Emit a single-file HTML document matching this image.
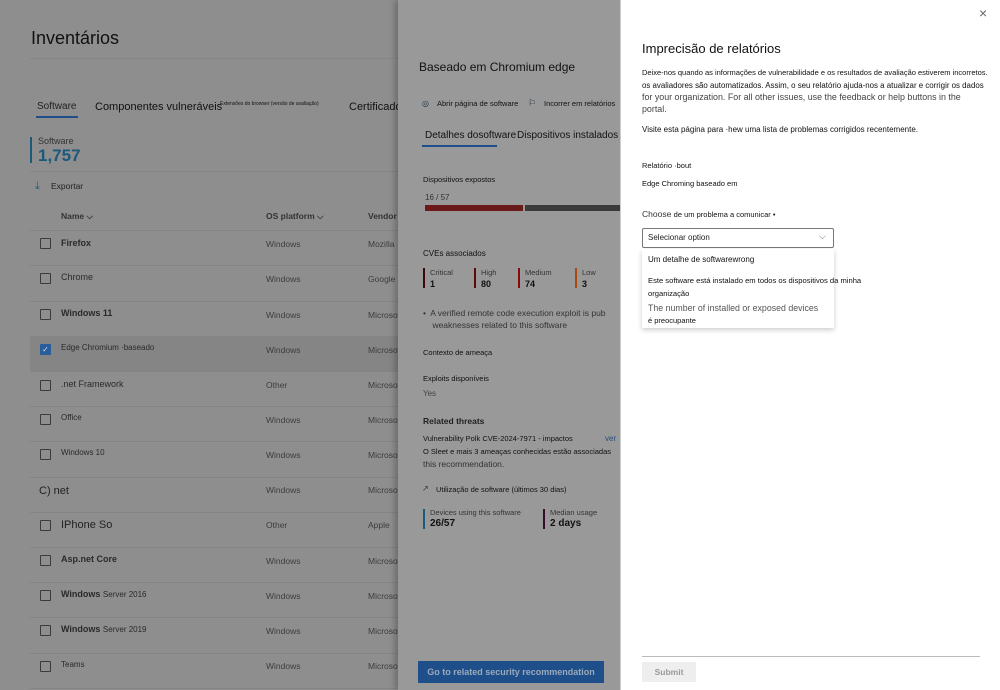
<!DOCTYPE html>
<html><head><meta charset="utf-8"><style>
*{margin:0;padding:0;box-sizing:border-box}
body{width:1000px;height:690px;overflow:hidden;position:relative;font-family:"Liberation Sans",sans-serif;background:#8e8e8e;color:#111}
.a{position:absolute;white-space:nowrap}
.l{position:absolute;height:1px;background:#848484}
.cb{position:absolute;left:40px;width:11px;height:11px;border:1px solid #3a3a3a;border-radius:1px}
.t{font-size:9px;color:#2a2a2a}
.g{color:#3c3c3c;font-size:8.5px}
#mid{position:absolute;left:398px;top:0;width:222px;height:690px;background:#999;box-shadow:-3px 0 6px rgba(0,0,0,.25)}
#rp{position:absolute;left:620px;top:0;width:380px;height:690px;background:#fff;border-left:1px solid #ccc}
</style></head><body>
<div class="a" style="left:31px;top:28px;font-size:18px;color:#111">Inventários</div>
<div class="l" style="left:30px;top:58px;width:370px;background:#858585"></div>
<div class="a" style="left:37px;top:101px;font-size:10px;color:#222">Software</div>
<div class="a" style="left:36px;top:116px;width:42px;height:2px;background:#1f4f8a"></div>
<div class="a" style="left:95px;top:101px;font-size:11px;color:#111">Componentes vulneráveis</div>
<div class="a" style="left:220px;top:101px;font-size:5px;color:#111">Extensões do browser (versão de avaliação)</div>
<div class="a" style="left:349px;top:101px;font-size:11px;color:#111">Certificado</div>
<div class="a" style="left:30px;top:137px;width:2px;height:26px;background:#1d5a7a"></div>
<div class="a" style="left:38px;top:136px;font-size:9px;color:#333">Software</div>
<div class="a" style="left:38px;top:146px;font-size:17px;font-weight:bold;color:#1d5a7a">1,757</div>
<div class="l" style="left:30px;top:171px;width:370px"></div>
<div class="a" style="left:35px;top:180px;font-size:11px;color:#1d5a7a">⤓</div>
<div class="a" style="left:51px;top:181px;font-size:8.5px;color:#222">Exportar</div>
<div class="a" style="left:61px;top:211px;font-size:8.5px;font-weight:bold;color:#333">Name ⌵</div>
<div class="a" style="left:266px;top:211px;font-size:8.5px;font-weight:bold;color:#333">OS platform ⌵</div>
<div class="a" style="left:368px;top:211px;font-size:8.5px;font-weight:bold;color:#333">Vendor</div>
<div class="l" style="left:30px;top:230px;width:370px"></div>
<div class="a" style="left:30px;top:336px;width:370px;height:35px;background:#858585"></div>

<div class="cb" style="top:238px"></div><div class="a t" style="left:61px;top:238px;font-weight:bold">Firefox</div><div class="a g" style="left:266px;top:239px">Windows</div><div class="a g" style="left:368px;top:239px">Mozilla</div><div class="l" style="left:30px;top:265px;width:370px"></div>
<div class="cb" style="top:273px"></div><div class="a t" style="left:61px;top:272px">Chrome</div><div class="a g" style="left:266px;top:274px">Windows</div><div class="a g" style="left:368px;top:274px">Google</div><div class="l" style="left:30px;top:301px;width:370px"></div>
<div class="cb" style="top:309px"></div><div class="a t" style="left:61px;top:308px;font-weight:bold">Windows 11</div><div class="a g" style="left:266px;top:310px">Windows</div><div class="a g" style="left:368px;top:310px">Microsof</div>
<div class="cb" style="top:344px;background:#2a5d9c;border-color:#2a5d9c;color:#ddd;font-size:8px;line-height:9px;text-align:center">✓</div><div class="a t" style="left:61px;top:343px;font-size:8px">Edge Chromium ·baseado</div><div class="a g" style="left:266px;top:345px">Windows</div><div class="a g" style="left:368px;top:345px">Microsof</div><div class="l" style="left:30px;top:371px;width:370px"></div>
<div class="cb" style="top:380px"></div><div class="a t" style="left:61px;top:379px">.net Framework</div><div class="a g" style="left:266px;top:380px">Other</div><div class="a g" style="left:368px;top:380px">Microsof</div><div class="l" style="left:30px;top:406px;width:370px"></div>
<div class="cb" style="top:414px"></div><div class="a t" style="left:61px;top:413px;font-size:8px">Office</div><div class="a g" style="left:266px;top:415px">Windows</div><div class="a g" style="left:368px;top:415px">Microsof</div><div class="l" style="left:30px;top:441px;width:370px"></div>
<div class="cb" style="top:449px"></div><div class="a t" style="left:61px;top:448px;font-size:8px">Windows 10</div><div class="a g" style="left:266px;top:450px">Windows</div><div class="a g" style="left:368px;top:450px">Microsof</div><div class="l" style="left:30px;top:477px;width:370px"></div>
<div class="a" style="left:39px;top:485px;font-size:11px;color:#222">C) net</div><div class="a g" style="left:266px;top:485px">Windows</div><div class="a g" style="left:368px;top:485px">Microsof</div><div class="l" style="left:30px;top:512px;width:370px"></div>
<div class="cb" style="top:520px"></div><div class="a" style="left:61px;top:519px;font-size:11px;color:#222">IPhone So</div><div class="a g" style="left:266px;top:520px">Other</div><div class="a g" style="left:368px;top:520px">Apple</div><div class="l" style="left:30px;top:547px;width:370px"></div>
<div class="cb" style="top:555px"></div><div class="a t" style="left:61px;top:554px;font-weight:bold">Asp.net Core</div><div class="a g" style="left:266px;top:556px">Windows</div><div class="a g" style="left:368px;top:556px">Microsof</div><div class="l" style="left:30px;top:582px;width:370px"></div>
<div class="cb" style="top:590px"></div><div class="a t" style="left:61px;top:589px;font-weight:bold">Windows <span style="font-weight:normal;font-size:8px">Server 2016</span></div><div class="a g" style="left:266px;top:591px">Windows</div><div class="a g" style="left:368px;top:591px">Microsof</div><div class="l" style="left:30px;top:617px;width:370px"></div>
<div class="cb" style="top:625px"></div><div class="a t" style="left:61px;top:624px;font-weight:bold">Windows <span style="font-weight:normal;font-size:8px">Server 2019</span></div><div class="a g" style="left:266px;top:626px">Windows</div><div class="a g" style="left:368px;top:626px">Microsof</div><div class="l" style="left:30px;top:653px;width:370px"></div>
<div class="cb" style="top:661px"></div><div class="a t" style="left:61px;top:660px;font-size:8px">Teams</div><div class="a g" style="left:266px;top:661px">Windows</div><div class="a g" style="left:368px;top:661px">Microsof</div><div class="l" style="left:30px;top:688px;width:370px"></div>

<div id="mid">
<div class="a" style="left:21px;top:60px;font-size:12px;color:#111">Baseado em Chromium edge</div>
<div class="a" style="left:24px;top:99px;font-size:8px;color:#234">◎</div>
<div class="a" style="left:39px;top:99px;font-size:7.5px;color:#111">Abrir página de software</div>
<div class="a" style="left:130px;top:98px;font-size:9px;color:#234">⚐</div>
<div class="a" style="left:146px;top:99px;font-size:7.5px;color:#111">Incorrer em relatórios</div>
<div class="a" style="left:27px;top:130px;font-size:10px;color:#111">Detalhes dosoftware</div>
<div class="a" style="left:119px;top:130px;font-size:10px;color:#111">Dispositivos instalados</div>
<div class="a" style="left:24px;top:145px;width:75px;height:2px;background:#1f4f8a"></div>
<div class="a" style="left:25px;top:175px;font-size:7.5px;color:#111">Dispositivos expostos</div>
<div class="a" style="left:27px;top:193px;font-size:8px;color:#333">16 / 57</div>
<div class="a" style="left:27px;top:205px;width:98px;height:6px;background:#6a1a1a"></div>
<div class="a" style="left:127px;top:205px;width:95px;height:6px;background:#3a3a3a"></div>
<div class="a" style="left:25px;top:249px;font-size:8px;color:#111">CVEs associados</div>
<div class="a" style="left:25px;top:268px;width:2px;height:20px;background:#3a0a0a"></div><div class="a" style="left:32px;top:268px;font-size:7.5px;color:#333">Critical</div><div class="a" style="left:32px;top:279px;font-size:9px;font-weight:bold">1</div>
<div class="a" style="left:76px;top:268px;width:2px;height:20px;background:#5a0a0a"></div><div class="a" style="left:83px;top:268px;font-size:7.5px;color:#333">High</div><div class="a" style="left:83px;top:279px;font-size:9px;font-weight:bold">80</div>
<div class="a" style="left:120px;top:268px;width:2px;height:20px;background:#8a0a0a"></div><div class="a" style="left:127px;top:268px;font-size:7.5px;color:#333">Medium</div><div class="a" style="left:127px;top:279px;font-size:9px;font-weight:bold">74</div>
<div class="a" style="left:177px;top:268px;width:2px;height:20px;background:#a84a10"></div><div class="a" style="left:184px;top:268px;font-size:7.5px;color:#333">Low</div><div class="a" style="left:184px;top:279px;font-size:9px;font-weight:bold">3</div>
<div class="a" style="left:25px;top:307px;font-size:8.5px;color:#333;line-height:12px">•&nbsp; A verified remote code execution exploit is pub<br>&nbsp;&nbsp;&nbsp; weaknesses related to this software</div>
<div class="a" style="left:25px;top:348px;font-size:7.5px;color:#111">Contexto de ameaça</div>
<div class="a" style="left:25px;top:374px;font-size:7.5px;color:#111">Exploits disponíveis</div>
<div class="a" style="left:25px;top:389px;font-size:8px;color:#444">Yes</div>
<div class="a" style="left:25px;top:416px;font-size:8.5px;font-weight:bold;color:#222">Related threats</div>
<div class="a" style="left:25px;top:434px;font-size:7.5px;color:#111">Vulnerability Polk CVE-2024-7971 - impactos</div>
<div class="a" style="left:207px;top:434px;font-size:8px;color:#2a4f7a">ver</div>
<div class="a" style="left:25px;top:447px;font-size:7.5px;color:#111">O Sleet e mais 3 ameaças conhecidas estão associadas</div>
<div class="a" style="left:25px;top:459px;font-size:8.5px;color:#333">this recommendation.</div>
<div class="a" style="left:24px;top:484px;font-size:8px;color:#234">↗</div>
<div class="a" style="left:38px;top:485px;font-size:7.5px;color:#111">Utilização de software (últimos 30 dias)</div>
<div class="a" style="left:25px;top:509px;width:2px;height:20px;background:#1d5a7a"></div><div class="a" style="left:32px;top:508px;font-size:7.5px;color:#333">Devices using this software</div><div class="a" style="left:32px;top:518px;font-size:10px;font-weight:bold">26/57</div>
<div class="a" style="left:145px;top:509px;width:2px;height:20px;background:#3a0a2a"></div><div class="a" style="left:152px;top:508px;font-size:7.5px;color:#333">Median usage</div><div class="a" style="left:152px;top:518px;font-size:10px;font-weight:bold">2 days</div>
<div class="a" style="left:20px;top:661px;width:186px;height:22px;background:#1f4f8a;color:#9ab;font-size:9px;font-weight:bold;text-align:center;line-height:22px">Go to related security recommendation</div>
</div>

<div id="rp">
<div class="a" style="left:358px;top:5px;font-size:14px;color:#666">×</div>
<div class="a" style="left:21px;top:41px;font-size:13px;color:#111">Imprecisão de relatórios</div>
<div class="a" style="left:21px;top:66px;font-size:7.5px;color:#111;line-height:13px">Deixe-nos quando as informações de vulnerabilidade e os resultados de avaliação estiverem incorretos.</div>
<div class="a" style="left:21px;top:79px;font-size:7.9px;color:#111;line-height:13px">os avaliadores são automatizados. Assim, o seu relatório ajuda-nos a atualizar e corrigir os dados</div>
<div class="a" style="left:21px;top:91px;font-size:8.9px;color:#444;line-height:12px">for your organization. For all other issues, use the feedback or help buttons in the<br>portal.</div>
<div class="a" style="left:21px;top:125px;font-size:8px;color:#111">Visite esta página para ·hew uma lista de problemas corrigidos recentemente.</div>
<div class="a" style="left:21px;top:161px;font-size:7.5px;color:#111">Relatório ·bout</div>
<div class="a" style="left:21px;top:179px;font-size:7.5px;color:#111">Edge Chroming baseado em</div>
<div class="a" style="left:21px;top:209px;font-size:8.5px;color:#333">Choose <span style="font-size:7.5px;color:#111">de um problema a comunicar •</span></div>
<div class="a" style="left:21px;top:228px;width:192px;height:20px;border:1px solid #777;border-radius:2px"></div>
<div class="a" style="left:27px;top:233px;font-size:8px;color:#222">Selecionar option</div>
<div class="a" style="left:198px;top:231px;font-size:9px;color:#666">⌵</div>
<div class="a" style="left:21px;top:249px;width:192px;height:79px;background:#fff;box-shadow:0 2px 5px rgba(0,0,0,.2)"></div>
<div class="a" style="left:27px;top:255px;font-size:8px;color:#111">Um detalhe de softwarewrong</div>
<div class="a" style="left:27px;top:274px;font-size:7.6px;color:#111;line-height:13px">Este software está instalado em todos os dispositivos da minha<br>organização</div>
<div class="a" style="left:27px;top:302px;font-size:8.8px;color:#555;line-height:12px">The number of installed or exposed devices<br><span style="font-size:7.5px;color:#111">é preocupante</span></div>
<div class="a" style="left:21px;top:656px;width:338px;height:1px;background:#bbb"></div>
<div class="a" style="left:21px;top:662px;width:54px;height:20px;background:#eee;color:#999;font-size:8.5px;font-weight:bold;text-align:center;line-height:20px">Submit</div>
</div>
</body></html>
